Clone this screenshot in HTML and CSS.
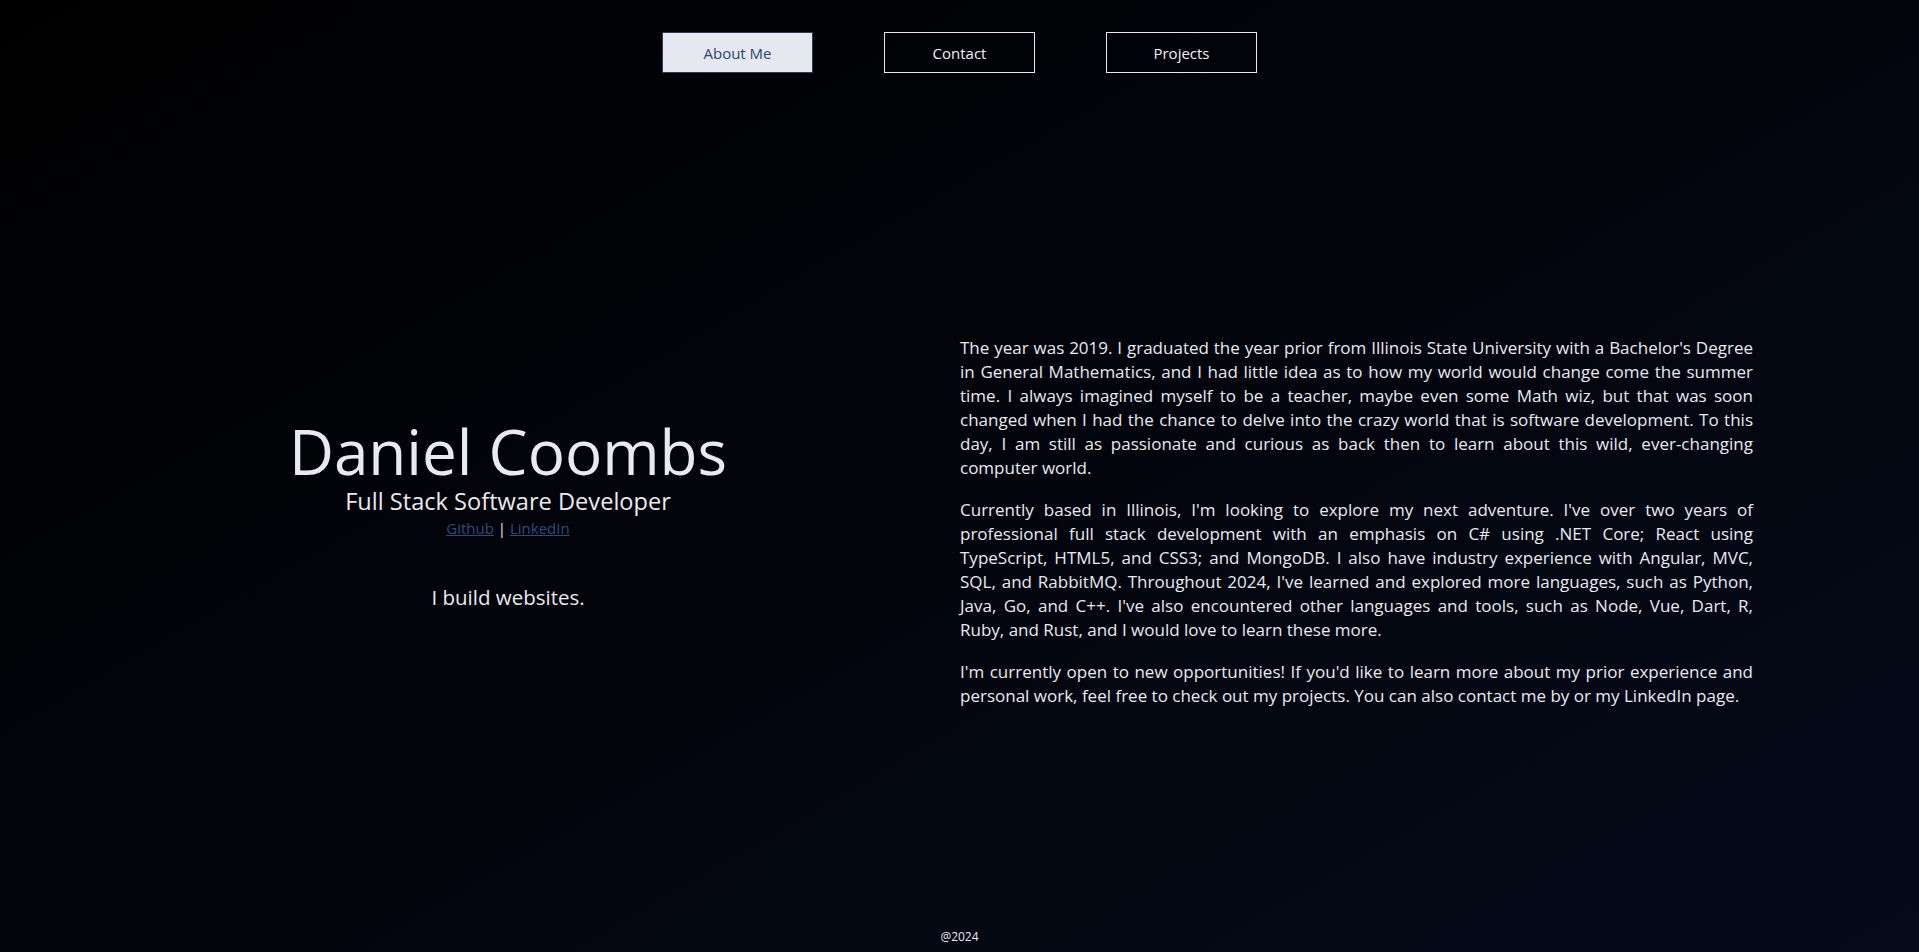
FILE: index.html
```html
<!DOCTYPE html>
<html lang="en">
<head>
<meta charset="utf-8">
<title>Daniel Coombs</title>
<link rel="stylesheet" href="styles.css">
</head>
<body>
<div class="page">
  <nav class="nav">
    <a class="nav-btn active" href="#">About Me</a>
    <a class="nav-btn" href="#">Contact</a>
    <a class="nav-btn" href="#">Projects</a>
  </nav>
  <main class="main">
    <section class="intro">
      <h1 class="name">Daniel Coombs</h1>
      <h2 class="role">Full Stack Software Developer</h2>
      <div class="links"><a href="#">Github</a> | <a href="#">LinkedIn</a></div>
      <p class="tagline">I build websites.</p>
    </section>
    <section class="about">
      <p>The year was 2019. I graduated the year prior from Illinois State University with a Bachelor's Degree in General Mathematics, and I had little idea as to how my world would change come the summer time. I always imagined myself to be a teacher, maybe even some Math wiz, but that was soon changed when I had the chance to delve into the crazy world that is software development. To this day, I am still as passionate and curious as back then to learn about this wild, ever-changing computer world.</p>
      <p>Currently based in Illinois, I'm looking to explore my next adventure. I've over two years of professional full stack development with an emphasis on C# using .NET Core; React using TypeScript, HTML5, and CSS3; and MongoDB. I also have industry experience with Angular, MVC, SQL, and RabbitMQ. Throughout 2024, I've learned and explored more languages, such as Python, Java, Go, and C++. I've also encountered other languages and tools, such as Node, Vue, Dart, R, Ruby, and Rust, and I would love to learn these more.</p>
      <p>I'm currently open to new opportunities! If you'd like to learn more about my prior experience and personal work, feel free to check out my projects. You can also contact me by or my LinkedIn page.</p>
    </section>
  </main>
  <footer class="footer">@2024</footer>
</div>
</body>
</html>
```
FILE: styles.css
```css
* { box-sizing: border-box; }
html, body { margin: 0; padding: 0; }
body {
  font-family: "Open Sans", "Noto Sans", sans-serif;
  color: #e8eaf0;
  background: linear-gradient(150deg, #000000 0%, #02040a 45%, #050b1b 100%);
  min-height: 100vh;
}
.page {
  height: 952px;
  display: flex;
  flex-direction: column;
}
.nav {
  display: flex;
  justify-content: center;
  gap: 71px;
  padding-top: 32px;
}
.nav-btn {
  width: 151px;
  height: 41px;
  display: flex;
  align-items: center;
  justify-content: center;
  border: 1px solid #e6e8ee;
  color: #f0f1f4;
  text-decoration: none;
  font-size: 15px;
}
.nav-btn.active {
  background: #e6e8ef;
  color: #2b4674;
  border-color: #2a3b5c;
}
.main {
  display: grid;
  grid-template-columns: 904px 793px;
  align-items: center;
  padding-left: 56px;
  margin-top: 263px;
}
.intro {
  text-align: center;
  margin-bottom: 17px;
}
.name {
  font-size: 62px;
  line-height: 70px;
  font-weight: 400;
  margin: 0;
  color: #e8eaf0;
}
.role {
  font-size: 23.6px;
  line-height: 30px;
  font-weight: 400;
  margin: 0;
}
.links {
  font-size: 15px;
  line-height: 20px;
  margin-top: 2px;
}
.links a { color: #2d4b7e; }
.tagline {
  font-size: 20.5px;
  line-height: 28px;
  margin: 45px 0 0;
}
.about {
  font-size: 17px;
  line-height: 24px;
  text-align: justify;
}
.about p { margin: 0 0 18px; }
.about p:last-child { margin-bottom: 0; }
.footer {
  margin-top: auto;
  text-align: center;
  font-size: 12px;
  line-height: 16px;
  padding-bottom: 7px;
}
```
